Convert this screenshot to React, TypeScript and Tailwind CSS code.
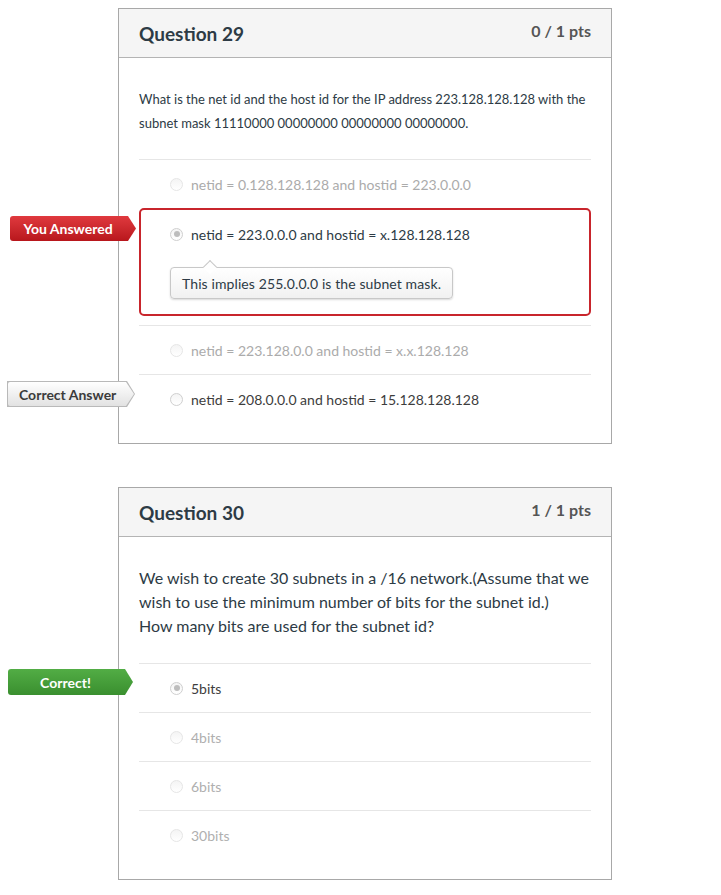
import React from 'react';

type Answer = {
  text: string;
  state: 'muted' | 'picked' | 'correct' | 'pickedCorrect';
  comment?: string;
};

const ARROW = '[clip-path:polygon(0_0,calc(100%-8px)_0,100%_50%,calc(100%-8px)_100%,0_100%)]';

const Radio = ({ checked, faint }: { checked?: boolean; faint?: boolean }) => (
  <span
    className={`flex h-[13px] w-[13px] shrink-0 items-center justify-center rounded-full border bg-gradient-to-b from-[#f4f4f4] to-white ${
      faint ? 'border-[#e6e6e6]' : 'border-[#cfcfcf]'
    }`}
  >
    {checked && <span className="h-[6px] w-[6px] rounded-full bg-[#bdbdbd]" />}
  </span>
);

const YouAnswered = () => (
  <div
    className={`absolute left-[-129px] top-[8px] flex h-[25px] w-[126px] items-center rounded-l-[3px] bg-gradient-to-b from-[#e0393e] to-[#b8161c] pr-[10px] ${ARROW}`}
  >
    <span className="w-full text-center text-[14px] font-bold text-white">You Answered</span>
  </div>
);

const CorrectAnswer = () => (
  <div className={`absolute left-[-132px] top-[6px] h-[26px] w-[128px] bg-[#b9b9b9] ${ARROW}`}>
    <div
      className={`absolute inset-[1px] flex items-center rounded-l-[2px] bg-gradient-to-b from-white to-[#e2e2e2] pl-[11px] ${ARROW}`}
    >
      <span className="text-[14px] font-bold text-[#3b3b3b]">Correct Answer</span>
    </div>
  </div>
);

const CorrectBang = () => (
  <div
    className={`absolute left-[-131px] top-[5px] flex h-[26px] w-[125px] items-center rounded-l-[3px] bg-gradient-to-b from-[#52ad45] to-[#3a8f2f] pr-[10px] ${ARROW}`}
  >
    <span className="w-full text-center text-[14px] font-bold text-white">Correct!</span>
  </div>
);

const AnswerRow = ({ a, kind }: { a: Answer; kind: 'q29' | 'q30' }) => {
  if (a.state === 'picked') {
    return (
      <div className="relative">
        <YouAnswered />
        <div className="mb-[9px] h-[108px] rounded-[5px] border-2 border-[#c8252c] pl-[29px] pt-[14px]">
          <div className="flex h-[20px] items-center gap-[8px]">
            <Radio checked />
            <span className="text-[14px] text-[#2d3b45]">{a.text}</span>
          </div>
          <div className="relative mt-[23px] inline-block rounded-[4px] border border-[#c8c8c8] bg-gradient-to-b from-white to-[#f1f1f1] px-[11px] py-[3px] shadow-[0_1px_2px_rgba(0,0,0,0.15)]">
            <span className="absolute left-[34px] top-[-6px] h-[10px] w-[10px] rotate-45 border-l border-t border-[#c8c8c8] bg-white" />
            <span className="text-[14px] tracking-[0.1px] text-[#2d3b45]">{a.comment}</span>
          </div>
        </div>
      </div>
    );
  }
  const dark = a.state === 'correct' || a.state === 'pickedCorrect';
  return (
    <div className="relative flex h-[49px] items-center gap-[8px] border-t border-[#e6e6e6] pl-[31px]">
      {a.state === 'correct' && <CorrectAnswer />}
      {a.state === 'pickedCorrect' && <CorrectBang />}
      <Radio checked={a.state === 'pickedCorrect'} faint={!dark} />
      <span
        className={`text-[14px] ${dark ? 'text-[#3d3d3d]' : kind === 'q29' ? 'text-[#ababab]' : 'text-[#afafaf]'}`}
      >
        {a.text}
      </span>
    </div>
  );
};

const QuestionCard = ({
  title,
  pts,
  children,
  answers,
  kind,
}: {
  title: string;
  pts: string;
  children: React.ReactNode;
  answers: Answer[];
  kind: 'q29' | 'q30';
}) => (
  <div className="ml-[118px] w-[494px] border border-[#a8a8a8] bg-white">
    <div className="flex h-[49px] items-center justify-between border-b border-[#b4b4b4] bg-[#f5f5f5] px-[20px]">
      <h2 className="mt-[2px] text-[19px] font-bold text-[#2d3b45]">{title}</h2>
      <span className="-mt-[5px] text-[16px] font-bold text-[#555]">{pts}</span>
    </div>
    <div className="px-[20px] pb-[20px] pt-[29px]">
      {children}
      <div className={kind === 'q29' ? 'mt-[24px]' : 'mt-[25px]'}>
        {answers.map((a, i) => (
          <AnswerRow key={i} a={a} kind={kind} />
        ))}
      </div>
    </div>
  </div>
);

export default function App() {
  const q29: Answer[] = [
    { text: 'netid = 0.128.128.128 and hostid = 223.0.0.0', state: 'muted' },
    {
      text: 'netid = 223.0.0.0 and hostid = x.128.128.128',
      state: 'picked',
      comment: 'This implies 255.0.0.0 is the subnet mask.',
    },
    { text: 'netid = 223.128.0.0 and hostid = x.x.128.128', state: 'muted' },
    { text: 'netid = 208.0.0.0 and hostid = 15.128.128.128', state: 'correct' },
  ];
  const q30: Answer[] = [
    { text: '5bits', state: 'pickedCorrect' },
    { text: '4bits', state: 'muted' },
    { text: '6bits', state: 'muted' },
    { text: '30bits', state: 'muted' },
  ];

  return (
    <div className="min-h-[895px] w-[721px] bg-white pt-[8px] font-['Lato',sans-serif]">
      <QuestionCard title="Question 29" pts="0 / 1 pts" answers={q29} kind="q29">
        <p className="text-[13px] leading-[24px] text-[#2d3b45]">
          What is the net id and the host id for the IP address 223.128.128.128 with the subnet mask 11110000
          00000000 00000000 00000000.
        </p>
      </QuestionCard>
      <div className="h-[43px]" />
      <QuestionCard title="Question 30" pts="1 / 1 pts" answers={q30} kind="q30">
        <p className="text-[16px] leading-[24px] text-[#2d3b45]">
          We wish to create 30 subnets in a /16 network.(Assume that we wish to use the minimum number of bits for
          the subnet id.)
          <br />
          How many bits are used for the subnet id?
        </p>
      </QuestionCard>
    </div>
  );
}
